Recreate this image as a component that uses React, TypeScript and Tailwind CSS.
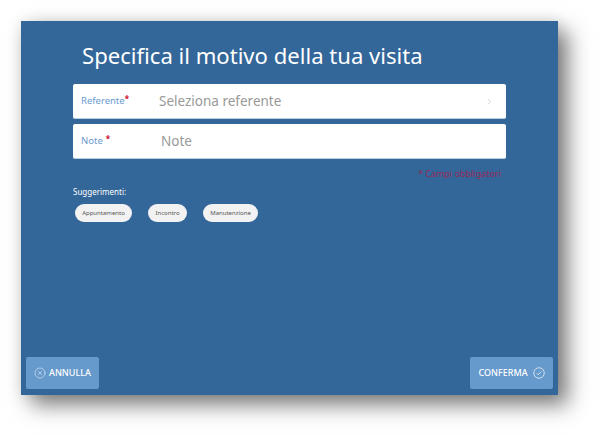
import { CircleX, ChevronRight } from "lucide-react";

function Field({ label, gapClass, placeholder, indent, arrow }: { label: string; gapClass: string; placeholder: string; indent: string; arrow?: boolean }) {
  return (
    <div className="flex h-[35px] items-center rounded-[2px] border-b border-[#b9cde3] bg-white pl-2 pr-3">
      <div className="flex w-[78px] shrink-0 items-start text-[9.5px] leading-[14px] text-[#6b9bd1]">
        <span>{label}</span>
        <span className={`${gapClass} -mt-[2px] text-[8px] font-bold text-[#d0021b]`}>*</span>
      </div>
      <span className={`${indent} flex-1 text-[13.5px] text-[#999999]`}>{placeholder}</span>
      {arrow && <ChevronRight className="h-[9px] w-[9px] text-[#b5b5b5]" strokeWidth={1.5} />}
    </div>
  );
}

function Chip({ children, className }: { children: string; className: string }) {
  return (
    <span className={`flex h-[18px] items-center justify-center rounded-full bg-[#f2f2f2] text-[6px] text-[#555555] ${className}`}>
      {children}
    </span>
  );
}

export default function App() {
  return (
    <div className="h-[437px] w-[600px] overflow-hidden bg-white pl-[21px] pt-[21px] font-['Noto_Sans',sans-serif]">
      <div className="flex h-[374px] w-[537px] flex-col bg-[#336699] shadow-[10px_10px_20px_rgba(0,0,0,0.5),0_0_14px_rgba(0,0,0,0.1)]">
        <h1 className="ml-[61px] mt-[19px] h-[44px] text-[22.1px] leading-[30px] font-normal text-white">Specifica il motivo della tua visita</h1>
        <div className="mx-[52px] flex flex-col gap-[5px]">
          <Field label="Referente" gapClass="" placeholder="Seleziona referente" indent="ml-0" arrow />
          <Field label="Note" gapClass="ml-[3px]" placeholder="Note" indent="ml-[2px]" />
        </div>
        <div className="mr-[57px] mt-[8px] text-right text-[9px] leading-[14px] text-[#96295a]">* Campi obbligatori</div>
        <div className="ml-[52px] mt-[5px] text-[8px] leading-[12px] text-white">Suggerimenti:</div>
        <div className="ml-[54px] mt-[6px] flex">
          <Chip className="w-[57px]">Appuntamento</Chip>
          <Chip className="ml-[16px] w-[39px]">Incontro</Chip>
          <Chip className="ml-[16px] w-[55px]">Manutenzione</Chip>
        </div>
        <div className="mt-auto mb-[6px] flex justify-between pl-[5px] pr-[5px]">
          <button className="flex h-[32px] w-[73px] items-center justify-center gap-[3px] rounded-[2px] bg-[#6699cc] text-[9px] font-medium text-white">
            <CircleX className="h-[12px] w-[12px]" strokeWidth={1} />
            ANNULLA
          </button>
          <button className="flex h-[32px] w-[83px] items-center justify-center gap-[5px] rounded-[2px] bg-[#6699cc] text-[9px] font-medium text-white">
            CONFERMA
            <svg viewBox="0 0 24 24" className="h-[12px] w-[12px]" fill="none" stroke="currentColor" strokeWidth={1.4}>
              <circle cx="12" cy="12" r="10.5" />
              <path d="M7.5 12.5l3 3 6-6.5" />
            </svg>
          </button>
        </div>
      </div>
    </div>
  );
}
